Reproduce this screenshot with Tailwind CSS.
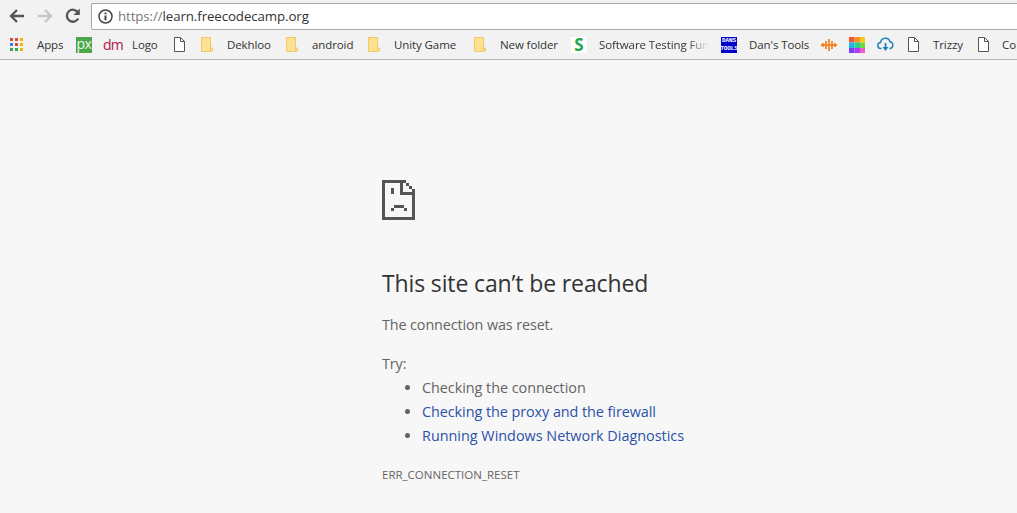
<!DOCTYPE html>
<html lang="en">
<head>
<meta charset="UTF-8">
<script src="https://cdn.jsdelivr.net/npm/@tailwindcss/browser@4"></script>
<title>learn.freecodecamp.org</title>
</head>
<body class="h-[513px] w-[1017px] overflow-hidden bg-[#f7f7f7] font-['Open_Sans',sans-serif]">
  <!-- Browser chrome -->
  <header class="h-[60px] border-b border-[#b5b5b5] bg-[#f2f2f2]">
    <div class="flex h-[32px] items-center">
      <svg class="ml-[8px] h-[18px] w-[18px]" viewBox="0 0 18 18" fill="none" stroke="#555" stroke-width="2.300"><path d="M16 9H3M9 3L3 9l6 6"/></svg>
      <svg class="ml-[10px] h-[18px] w-[18px]" viewBox="0 0 18 18" fill="none" stroke="#c6c6c6" stroke-width="2.300"><path d="M2 9h13M9 3l6 6-6 6"/></svg>
      <svg class="ml-[10px] h-[18px] w-[18px]" viewBox="0 0 18 18" fill="none" stroke="#555" stroke-width="2.300"><path d="M14.2 11.500A6 6 0 1 1 14 5.600"/><path d="M15.800 1.500v6.500H9.500z" fill="#555" stroke="none"/></svg>
      <div class="ml-[9px] flex h-[27px] flex-1 items-center rounded-l-[2px] border border-r-0 border-[#a8a8a8] bg-white pl-[6px]">
        <svg class="h-[15px] w-[15px]" viewBox="0 0 15 15" fill="none" stroke="#444" stroke-width="1.500"><circle cx="7.500" cy="7.500" r="6.500"/><path d="M7.500 6.500v4.800M7.500 3.500v1.800" stroke-width="2"/></svg>
        <span class="ml-[5px] pt-[2px] text-[13.3px] leading-none tracking-[-0.1px] text-[#333]"><span class="text-[#777]">https://</span>learn.freecodecamp.org</span>
      </div>
    </div>
    <nav class="flex h-[25px] items-center whitespace-nowrap text-[11.5px] tracking-[-0.1px] text-[#333]">
      <svg class="ml-[10px] h-[13px] w-[13px] shrink-0" viewBox="0 0 13 13">
        <path fill="#e0483e" d="M0 0h3v3H0z"/><path fill="#e0483e" d="M5 0h3v3H5z"/><path fill="#f4b400" d="M10 0h3v3h-3z"/>
        <path fill="#3d7ee8" d="M0 5h3v3H0z"/><path fill="#e0483e" d="M5 5h3v3H5z"/><path fill="#f4b400" d="M10 5h3v3h-3z"/>
        <path fill="#34a853" d="M0 10h3v3H0z"/><path fill="#34a853" d="M5 10h3v3H5z"/><path fill="#f4b400" d="M10 10h3v3h-3z"/>
      </svg>
      <span class="ml-[14px] w-[39px]">Apps</span>
      <span class="flex h-[16px] w-[16px] shrink-0 items-center justify-center bg-[#4ca64c] pb-[2px] text-[14px] leading-none tracking-[-0.5px] text-[#e8f5e8]">px</span>
      <span class="ml-[11px] w-[17px] shrink-0 text-[14px] font-normal leading-none tracking-[-0.8px] text-[#b5174f]">dm</span>
      <span class="ml-[12px] w-[41px]">Logo</span>
      <svg class="h-[15px] w-[12px] shrink-0" viewBox="0 0 12 15" fill="#fff" stroke="#555"><path d="M1.500 .5h6l4 4v10h-10z"/><path d="M7.500 .5v4h4" fill="none"/></svg>
      <svg class="ml-[16px] h-[15px] w-[12px] shrink-0" viewBox="0 0 12 15" fill="#fde293" stroke="#efc867"><path d="M.5 .5h9v14h-9zM9.500 11h2v3h-2z"/></svg>
      <span class="ml-[14px] w-[59px]">Dekhloo</span>
      <svg class="h-[15px] w-[12px] shrink-0" viewBox="0 0 12 15" fill="#fde293" stroke="#efc867"><path d="M.5 .5h9v14h-9zM9.500 11h2v3h-2z"/></svg>
      <span class="ml-[14px] w-[56px]">android</span>
      <svg class="h-[15px] w-[12px] shrink-0" viewBox="0 0 12 15" fill="#fde293" stroke="#efc867"><path d="M.5 .5h9v14h-9zM9.500 11h2v3h-2z"/></svg>
      <span class="ml-[14px] w-[80px]">Unity Game</span>
      <svg class="h-[15px] w-[12px] shrink-0" viewBox="0 0 12 15" fill="#fde293" stroke="#efc867"><path d="M.5 .5h9v14h-9zM9.500 11h2v3h-2z"/></svg>
      <span class="ml-[14px] w-[71px]">New folder</span>
      <span class="flex h-[16px] w-[16px] shrink-0 items-center justify-center bg-white text-[17px] font-bold leading-none text-[#1fa750]">S</span>
      <span class="ml-[12px] w-[110px] overflow-hidden [mask-image:linear-gradient(to_right,black_80%,transparent)]">Software Testing Fun</span>
      <span class="ml-[12px] flex h-[16px] w-[16px] shrink-0 flex-col items-center justify-center bg-[#0000c8] font-['Liberation_Mono',monospace] text-[6px] font-bold leading-[8px] text-white"><span>DANS</span><span>TOOLS</span></span>
      <span class="ml-[12px] w-[72px]">Dan's Tools</span>
      <svg class="h-[14px] w-[16px] shrink-0" viewBox="0 0 16 14" fill="none" stroke="#f0872a" stroke-width="1.800"><path d="M0 7h16M2 5v4M5 3v8M8 1v12M11 3v8M14 5v4"/></svg>
      <svg class="ml-[12px] h-[16px] w-[16px] shrink-0" viewBox="0 0 16 16">
        <path fill="#f4573c" d="M0 0h5.500v5.500H0z"/><path fill="#f7941d" d="M5.500 0H11v5.500H5.500z"/><path fill="#f9c921" d="M11 0h5v5.500h-5z"/>
        <path fill="#1fb6e9" d="M0 5.500h5.500V11H0z"/><path fill="#2fd08a" d="M5.500 5.500H11V11H5.500z"/><path fill="#6fd63f" d="M11 5.500h5V11h-5z"/>
        <path fill="#7c3dff" d="M0 11h5.500v5H0z"/><path fill="#b13df0" d="M5.500 11H11v5H5.500z"/><path fill="#f25bd0" d="M11 11h5v5h-5z"/>
      </svg>
      <svg class="ml-[12px] h-[15px] w-[17px] shrink-0" viewBox="0 0 17 15" fill="none" stroke="#1f7fb8" stroke-width="1.400"><path d="M4.500 11.500H4a3 3 0 0 1-.4-6A4.800 4.800 0 0 1 13 4.800 3.400 3.400 0 0 1 13 11.500h-.5"/><path d="M8.500 6v6" stroke-width="1.800"/><path d="M5.500 10l3 4 3-4z" fill="#1f7fb8" stroke="none"/></svg>
      <svg class="ml-[13px] h-[15px] w-[12px] shrink-0" viewBox="0 0 12 15" fill="#fff" stroke="#555"><path d="M1.500 .5h6l4 4v10h-10z"/><path d="M7.500 .5v4h4" fill="none"/></svg>
      <span class="ml-[14px] w-[44px]">Trizzy</span>
      <svg class="h-[15px] w-[12px] shrink-0" viewBox="0 0 12 15" fill="#fff" stroke="#555"><path d="M1.500 .5h6l4 4v10h-10z"/><path d="M7.500 .5v4h4" fill="none"/></svg>
      <span class="ml-[13px]">Co</span>
    </nav>
  </header>

  <!-- Error page -->
  <main class="ml-[382px] w-[400px] pt-[120px]">
    <svg class="h-[40px] w-[33px]" viewBox="0 0 33 40" shape-rendering="crispEdges" fill="#555">
      <path d="M0 0h24v3h3v3h3v3h3v31H0zM3 3v34h27V15H18V3zM21 3v9h9v-3h-3V6h-3V3z" fill-rule="evenodd"/>
      <path d="M9 8h3v6H9zM9 28h3v3H9zM12 25h10v3H12zM22 28h3v3h-3z"/>
    </svg>
    <h1 class="mt-[46px] text-[23px] font-normal leading-[34px] tracking-[-0.13px] text-[#333]">This site can’t be reached</h1>
    <p class="mt-[14px] text-[14.4px] leading-[22px] tracking-[-0.12px] text-[#646464]">The connection was reset.</p>
    <p class="mt-[16px] text-[14.4px] leading-[24px] tracking-[-0.12px] text-[#646464]">Try:</p>
    <ul class="list-disc pl-[40px] text-[14.4px] leading-[24px] text-[#646464]">
      <li class="tracking-[-0.04px]">Checking the connection</li>
      <li class="tracking-[-0.06px]"><a class="text-[#2a52a8]" href="#">Checking the proxy and the firewall</a></li>
      <li><a class="text-[#2a52a8]" href="#">Running Windows Network Diagnostics</a></li>
    </ul>
    <p class="mt-[19px] text-[11.5px] leading-[16px] text-[#646464]">ERR_CONNECTION_RESET</p>
  </main>
</body>
</html>
